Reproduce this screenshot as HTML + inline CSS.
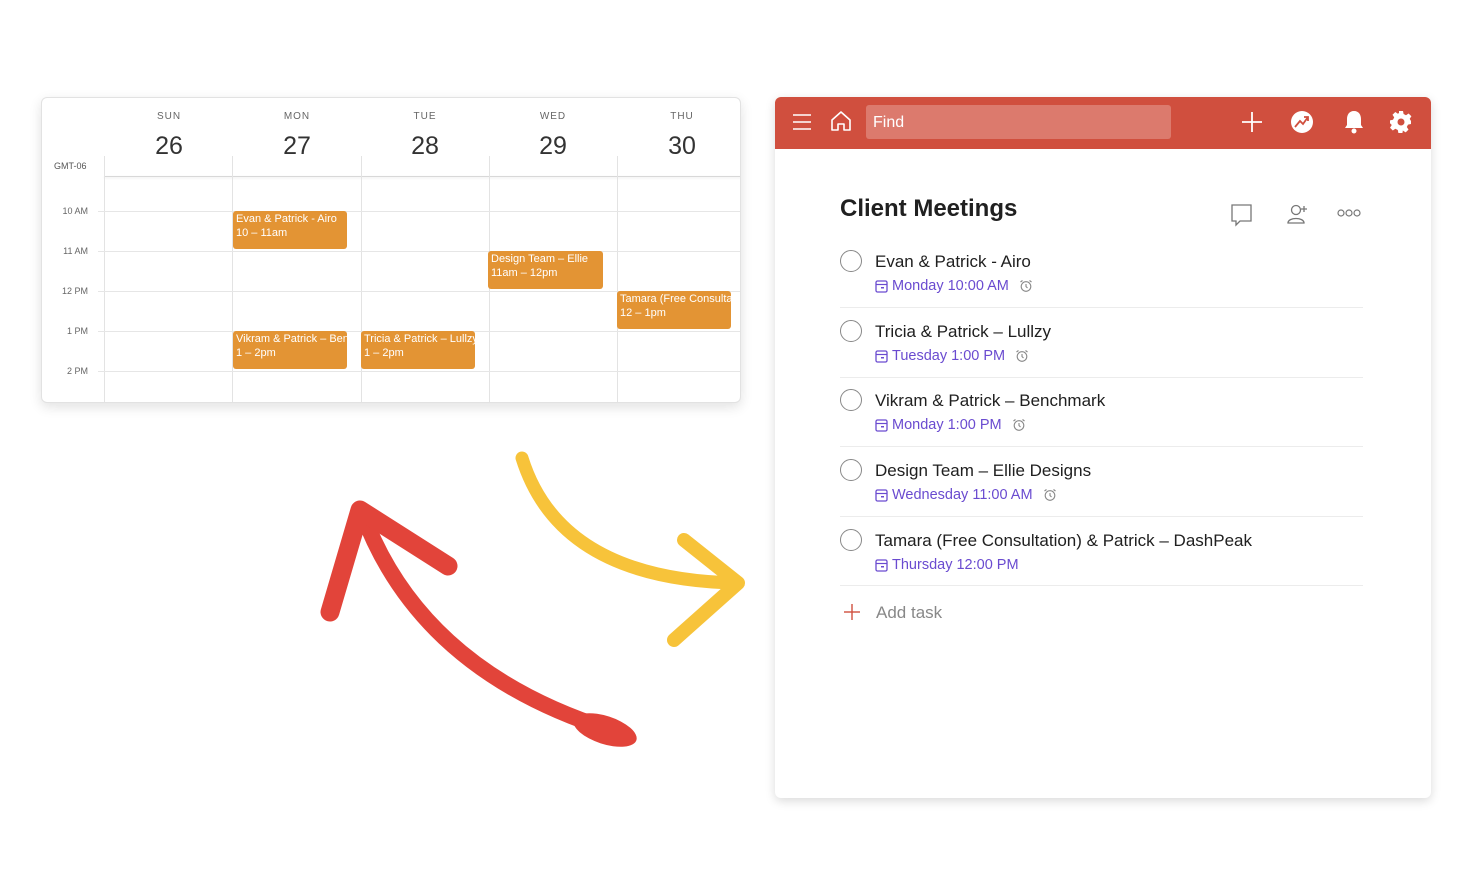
<!DOCTYPE html>
<html><head><style>
*{margin:0;padding:0;box-sizing:border-box}
body{width:1472px;height:892px;background:#fff;font-family:"Liberation Sans",Arial,sans-serif;position:relative;overflow:hidden}
.abs{position:absolute}
.cal{left:41px;top:97px;width:700px;height:306px;border:1px solid #e2e2e2;border-radius:6px;box-shadow:0 4px 12px rgba(0,0,0,.12);background:#fff;overflow:hidden}
.dow{font-size:10px;color:#666;letter-spacing:1px;text-align:center;width:128px}
.num{font-size:25px;color:#333;text-align:center;width:128px}
.vl{width:1px;background:#e3e3e3}
.hl{height:1px;background:#e6e6e6}
.tl{font-size:9px;color:#666;width:48px;text-align:right}
.ev{background:#e39434;color:#fff;font-size:11px;line-height:14px;padding:1px 3px;border-radius:3px;overflow:hidden;white-space:nowrap}
.panel{left:775px;top:97px;width:656px;height:701px;background:#fff;box-shadow:0 3px 10px rgba(0,0,0,.15);border-radius:6px;overflow:hidden}
.hdr{left:0;top:0;width:656px;height:52px;background:#d04f3e}
.task{font-size:17px;color:#202020}
.date{font-size:14.5px;color:#6a4bd0;display:flex;align-items:center;gap:4px}
.circ{width:22px;height:22px;border:1.5px solid #888;border-radius:50%}
.sep{height:1px;background:#ececec;width:523px;left:65px}
</style></head><body>
<div class="abs cal">
<div class="abs dow" style="left:63px;top:13px">SUN</div>
<div class="abs dow" style="left:191px;top:13px">MON</div>
<div class="abs dow" style="left:319px;top:13px">TUE</div>
<div class="abs dow" style="left:447px;top:13px">WED</div>
<div class="abs dow" style="left:576px;top:13px">THU</div>
<div class="abs num" style="left:63px;top:34px">26</div>
<div class="abs num" style="left:191px;top:34px">27</div>
<div class="abs num" style="left:319px;top:34px">28</div>
<div class="abs num" style="left:447px;top:34px">29</div>
<div class="abs num" style="left:576px;top:34px">30</div>
<div class="abs" style="left:12px;top:63px;font-size:9px;color:#555">GMT-06</div>
<div class="abs" style="left:62px;top:78px;width:640px;height:1px;background:#d8d8d8;box-shadow:0 1px 2px rgba(0,0,0,.1)"></div>
<div class="abs vl" style="left:62px;top:58px;height:260px"></div>
<div class="abs vl" style="left:190px;top:58px;height:260px"></div>
<div class="abs vl" style="left:319px;top:58px;height:260px"></div>
<div class="abs vl" style="left:447px;top:58px;height:260px"></div>
<div class="abs vl" style="left:575px;top:58px;height:260px"></div>
<div class="abs hl" style="left:56px;top:113px;width:650px"></div>
<div class="abs hl" style="left:56px;top:153px;width:650px"></div>
<div class="abs hl" style="left:56px;top:193px;width:650px"></div>
<div class="abs hl" style="left:56px;top:233px;width:650px"></div>
<div class="abs hl" style="left:56px;top:273px;width:650px"></div>
<div class="abs tl" style="left:-2px;top:108px">10 AM</div>
<div class="abs tl" style="left:-2px;top:148px">11 AM</div>
<div class="abs tl" style="left:-2px;top:188px">12 PM</div>
<div class="abs tl" style="left:-2px;top:228px">1 PM</div>
<div class="abs tl" style="left:-2px;top:268px">2 PM</div>
<div class="abs ev" style="left:191px;top:113px;width:114px;height:38px">Evan &amp; Patrick - Airo<br>10 – 11am</div>
<div class="abs ev" style="left:191px;top:233px;width:114px;height:38px">Vikram &amp; Patrick – Benchmark<br>1 – 2pm</div>
<div class="abs ev" style="left:319px;top:233px;width:114px;height:38px">Tricia &amp; Patrick – Lullzy<br>1 – 2pm</div>
<div class="abs ev" style="left:446px;top:153px;width:115px;height:38px">Design Team – Ellie<br>11am – 12pm</div>
<div class="abs ev" style="left:575px;top:193px;width:114px;height:38px">Tamara (Free Consultation)<br>12 – 1pm</div>
</div>

<svg class="abs" style="left:0;top:0" width="1472" height="892">
<g fill="none" stroke-linecap="round" stroke-linejoin="round">
<path d="M362 512 Q420 670 610 730" stroke="#e2443a" stroke-width="16"/>
<ellipse cx="605" cy="730" rx="33" ry="14" transform="rotate(18 605 730)" fill="#e2443a"/>
<path d="M330 612 L360 510 L448 566" stroke="#e2443a" stroke-width="19"/>
<path d="M522 458 Q560 580 738 583" stroke="#f7c33a" stroke-width="13"/>
<path d="M684 540 L738 583 L674 640" stroke="#f7c33a" stroke-width="14"/>
</g>
</svg>

<div class="abs panel">
<div class="abs hdr"></div>
<svg class="abs" style="left:16px;top:14px" width="22" height="22"><g stroke="#fff" stroke-width="1.6"><line x1="2" y1="4" x2="20" y2="4"/><line x1="2" y1="11" x2="20" y2="11"/><line x1="2" y1="18" x2="20" y2="18"/></g></svg>
<svg class="abs" style="left:55px;top:13px" width="22" height="22"><path d="M2 10 L11 2 L20 10 V20 H14 V14 H8 V20 H2 Z" fill="none" stroke="#fff" stroke-width="1.6" stroke-linejoin="round"/></svg>
<div class="abs" style="left:91px;top:8px;width:305px;height:34px;background:#dc7a6d;border-radius:3px;color:#fff;font-size:16px;padding:9px 7px">Find</div>
<svg class="abs" style="left:466px;top:14px" width="22" height="22"><g stroke="#fff" stroke-width="1.8"><line x1="11" y1="1" x2="11" y2="21"/><line x1="1" y1="11" x2="21" y2="11"/></g></svg>
<svg class="abs" style="left:515px;top:13px" width="24" height="24"><circle cx="12" cy="12" r="11" fill="#fff"/><path d="M5 17 L10 11 L13 14 L18 7 M14 7 H18 V11" stroke="#d04f3e" stroke-width="1.8" fill="none"/></svg>
<svg class="abs" style="left:568px;top:12px" width="22" height="26"><path d="M11 2 C6 2 4 6 4 10 V16 L2 19 H20 L18 16 V10 C18 6 16 2 11 2 Z" fill="#fff"/><circle cx="11" cy="22" r="2.5" fill="#fff"/></svg>
<svg class="abs" style="left:614px;top:13px" width="24" height="24" viewBox="0 0 24 24"><path fill="#fff" d="M10 1h4l.6 3 2.4 1.2 2.6-1.7 2.8 2.8-1.7 2.6L22 11v-1 4l-3 .6-1.2 2.4 1.7 2.6-2.8 2.8-2.6-1.7L14 20l-.6 3h-4l-.6-3-2.4-1.2-2.6 1.7-2.8-2.8 1.7-2.6L2 14l-1-.6v-3l3-.6 1.2-2.4-1.7-2.6 2.8-2.8 2.6 1.7L10 3z"/><circle cx="12" cy="12" r="3.5" fill="#d04f3e"/></svg>

<div class="abs" style="left:65px;top:98px;font-size:24px;font-weight:bold;color:#202020">Client Meetings</div>
<svg class="abs" style="left:455px;top:106px" width="24" height="24"><path d="M2 2 H21 V18 H10 L6 22 V18 H2 Z" fill="none" stroke="#777" stroke-width="1.3"/></svg>
<svg class="abs" style="left:511px;top:106px" width="24" height="22"><circle cx="10" cy="7" r="4.5" fill="none" stroke="#777" stroke-width="1.3"/><path d="M2 20 C2 14 18 14 18 20 Z" fill="none" stroke="#777" stroke-width="1.3"/><path d="M18 3 V9 M15 6 H21" stroke="#777" stroke-width="1.3"/></svg>
<svg class="abs" style="left:562px;top:111px" width="26" height="10"><g fill="none" stroke="#777" stroke-width="1.2"><circle cx="4" cy="5" r="3"/><circle cx="12" cy="5" r="3"/><circle cx="20" cy="5" r="3"/></g></svg>

<svg width="0" height="0" style="position:absolute"><defs>
<symbol id="cal" viewBox="0 0 13 13"><rect x="1" y="1" width="11" height="11" rx="1.5" fill="none" stroke="#6a4bd0" stroke-width="1.3"/><line x1="1" y1="4.5" x2="12" y2="4.5" stroke="#6a4bd0" stroke-width="1.2"/><rect x="6" y="7" width="3" height="1.5" fill="#6a4bd0"/></symbol>
<symbol id="alm" viewBox="0 0 14 14"><circle cx="7" cy="7.5" r="4.8" fill="none" stroke="#888" stroke-width="1.1"/><path d="M7 5 V7.5 L8.5 9 M1.5 3 L3.5 1.5 M12.5 3 L10.5 1.5" stroke="#888" stroke-width="1.1" fill="none"/></symbol>
</defs></svg>

<div class="abs circ" style="left:65px;top:153px"></div>
<div class="abs task" style="left:100px;top:155px">Evan &amp; Patrick - Airo</div>
<div class="abs date" style="left:100px;top:181px"><svg width="13" height="13"><use href="#cal"/></svg>Monday 10:00 AM <svg width="14" height="14" style="margin-left:6px"><use href="#alm"/></svg></div>
<div class="abs sep" style="top:210px"></div>
<div class="abs circ" style="left:65px;top:223px"></div>
<div class="abs task" style="left:100px;top:225px">Tricia &amp; Patrick – Lullzy</div>
<div class="abs date" style="left:100px;top:251px"><svg width="13" height="13"><use href="#cal"/></svg>Tuesday 1:00 PM <svg width="14" height="14" style="margin-left:6px"><use href="#alm"/></svg></div>
<div class="abs sep" style="top:280px"></div>
<div class="abs circ" style="left:65px;top:292px"></div>
<div class="abs task" style="left:100px;top:294px">Vikram &amp; Patrick – Benchmark</div>
<div class="abs date" style="left:100px;top:320px"><svg width="13" height="13"><use href="#cal"/></svg>Monday 1:00 PM <svg width="14" height="14" style="margin-left:6px"><use href="#alm"/></svg></div>
<div class="abs sep" style="top:349px"></div>
<div class="abs circ" style="left:65px;top:362px"></div>
<div class="abs task" style="left:100px;top:364px">Design Team – Ellie Designs</div>
<div class="abs date" style="left:100px;top:390px"><svg width="13" height="13"><use href="#cal"/></svg>Wednesday 11:00 AM <svg width="14" height="14" style="margin-left:6px"><use href="#alm"/></svg></div>
<div class="abs sep" style="top:419px"></div>
<div class="abs circ" style="left:65px;top:432px"></div>
<div class="abs task" style="left:100px;top:434px">Tamara (Free Consultation) &amp; Patrick – DashPeak</div>
<div class="abs date" style="left:100px;top:460px"><svg width="13" height="13"><use href="#cal"/></svg>Thursday 12:00 PM</div>
<div class="abs sep" style="top:488px"></div>
<svg class="abs" style="left:69px;top:507px" width="16" height="16"><g stroke="#d04f3e" stroke-width="1.4"><line x1="8" y1="0" x2="8" y2="16"/><line x1="0" y1="8" x2="16" y2="8"/></g></svg>
<div class="abs" style="left:101px;top:506px;font-size:17px;color:#888">Add task</div>
</div>
</body></html>
